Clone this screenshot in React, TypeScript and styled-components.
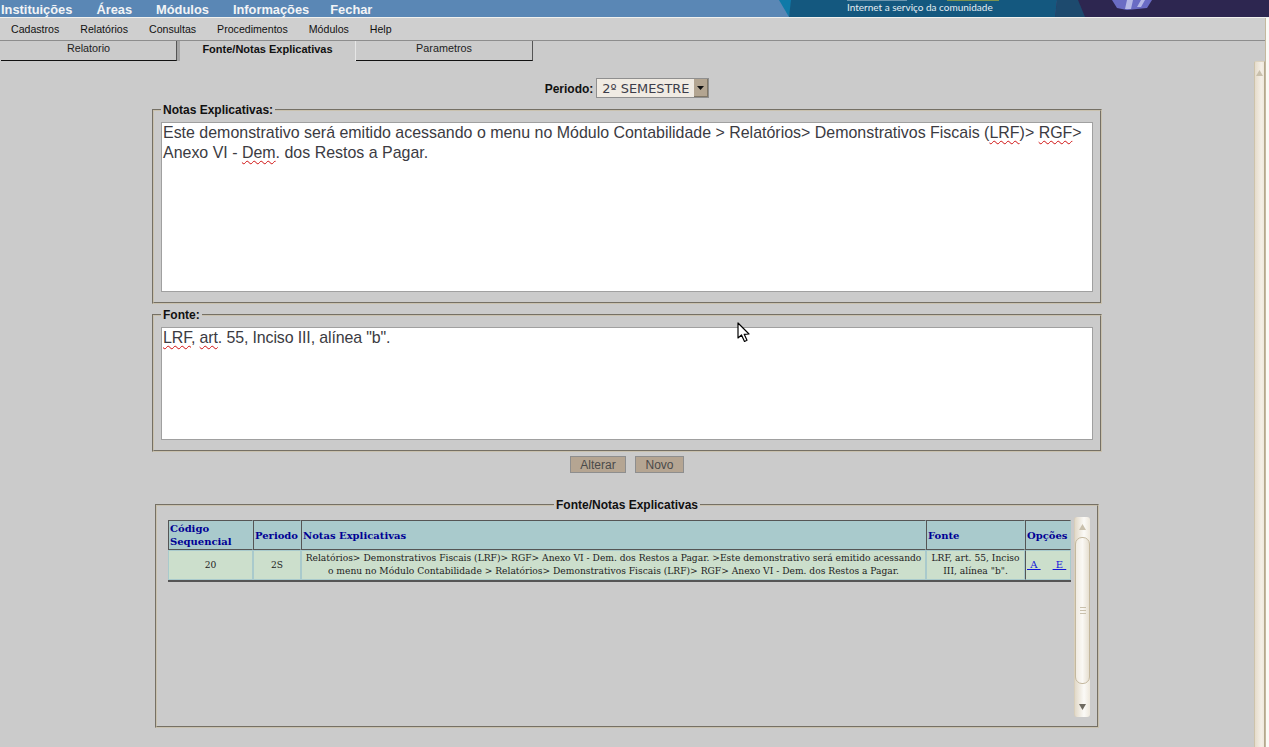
import styled, { createGlobalStyle } from "styled-components"

const GlobalStyle = createGlobalStyle`
  html, body {
    margin: 0;
    padding: 0;
    height: 747px;
    overflow: hidden;
    background: #cbcbcb;
    font-family: "Liberation Sans", Arial, sans-serif;
  }
`

const topMenu = ["Instituições", "Áreas", "Módulos", "Informações", "Fechar"]
const subMenu = ["Cadastros", "Relatórios", "Consultas", "Procedimentos", "Módulos", "Help"]

export default function App() {
  return (
    <Page>
      <GlobalStyle />
      <Banner>
        <TopMenu>
          {topMenu.map(item => (
            <TopItem key={item}>{item}</TopItem>
          ))}
        </TopMenu>
        <BannerArt>
          <svg width="494" height="17" viewBox="0 0 494 17">
            <rect width="494" height="17" fill="#5a87b5" />
            <polygon points="4,0 18,0 14,17" fill="#0f7aa8" />
            <polygon points="16,0 282,0 280,17 14,17" fill="#14587f" />
            <polygon points="282,0 494,0 494,17 280,17" fill="#2d2650" />
            <polygon points="280,17 282,0 303,0 310,17" fill="#1d4a6e" />
            <path d="M337 0 L377 0 L372 8 L352 10 L342 8 Z" fill="#6a6cc4" />
            <path d="M352 0 L358 0 L356 9 L350 9 Z M366 0 L370 0 L366 7 L362 7 Z" fill="#b6b9e6" />
            <rect x="72" y="0" width="60" height="1" fill="#a9c0cf" opacity="0.6" />
            <rect x="172" y="0" width="52" height="1" fill="#a8ad3c" opacity="0.7" />
          </svg>
          <BannerCaption>Internet a serviço da comunidade</BannerCaption>
        </BannerArt>
      </Banner>
      <Workspace>
        <Main>
          <SubMenu>
            {subMenu.map(item => (
              <SubItem key={item}>{item}</SubItem>
            ))}
          </SubMenu>
          <Tabs>
            <Tab $width={176}>Relatorio</Tab>
            <Tab $width={179} $active>
              Fonte/Notas Explicativas
            </Tab>
            <Tab $width={177}>Parametros</Tab>
          </Tabs>
          <Content>
            <Column>
              <Form>
                <PeriodRow>
                  <PeriodLabel>Periodo:</PeriodLabel>
                  <FakeSelect>
                    <span>2º SEMESTRE</span>
                    <SelectArrow>
                      <svg width="7" height="4" viewBox="0 0 7 4">
                        <polygon points="0,0 7,0 3.5,4" fill="#111" />
                      </svg>
                    </SelectArrow>
                  </FakeSelect>
                </PeriodRow>
                <FormGroup>
                  <GroupLegend>Notas Explicativas:</GroupLegend>
                  <TextBox $height={170}>
                    Este demonstrativo será emitido acessando o menu no Módulo Contabilidade &gt; Relatórios&gt;
                    Demonstrativos Fiscais (<Spell>LRF</Spell>)&gt; <Spell>RGF</Spell>&gt; Anexo VI - <Spell>Dem</Spell>. dos
                    Restos a Pagar.
                  </TextBox>
                </FormGroup>
                <FormGroup>
                  <GroupLegend>Fonte:</GroupLegend>
                  <TextBox $height={113} $tracking={-0.13}>
                    <Spell>LRF</Spell>, <Spell>art</Spell>. 55, Inciso III, alínea "b".
                  </TextBox>
                </FormGroup>
                <Buttons>
                  <ActionButton $width={56}>Alterar</ActionButton>
                  <ActionButton $width={49}>Novo</ActionButton>
                </Buttons>
                <ListGroup>
                  <ListLegend>Fonte/Notas Explicativas</ListLegend>
                  <ListBody>
                    <Table>
                      <colgroup>
                        <col style={{ width: 85 }} />
                        <col style={{ width: 48 }} />
                        <col style={{ width: 625 }} />
                        <col style={{ width: 99 }} />
                        <col style={{ width: 46 }} />
                      </colgroup>
                      <thead>
                        <tr>
                          <HeadCell>
                            Código
                            <br />
                            Sequencial
                          </HeadCell>
                          <HeadCell>Periodo</HeadCell>
                          <HeadCell>Notas Explicativas</HeadCell>
                          <HeadCell>Fonte</HeadCell>
                          <HeadCell>Opções</HeadCell>
                        </tr>
                      </thead>
                      <tbody>
                        <tr>
                          <BodyCell>20</BodyCell>
                          <BodyCell>2S</BodyCell>
                          <BodyCell>
                            Relatórios&gt; Demonstrativos Fiscais (LRF)&gt; RGF&gt; Anexo VI - Dem. dos Restos a Pagar.
                            &gt;Este demonstrativo será emitido acessando o menu no Módulo Contabilidade &gt; Relatórios&gt;
                            Demonstrativos Fiscais (LRF)&gt; RGF&gt; Anexo VI - Dem. dos Restos a Pagar.
                          </BodyCell>
                          <BodyCell>LRF, art. 55, Inciso III, alínea "b".</BodyCell>
                          <OptionsCell>
                            <OptionLink>{"\u00a0A\u00a0"}</OptionLink>
                            <OptionLink>{"\u00a0E\u00a0"}</OptionLink>
                          </OptionsCell>
                        </tr>
                      </tbody>
                    </Table>
                    <ListScrollbar>
                      <ScrollArrow>
                        <svg width="7" height="6" viewBox="0 0 7 6">
                          <polygon points="0,6 7,6 3.5,0" fill="#c9c0ac" />
                        </svg>
                      </ScrollArrow>
                      <ScrollThumb>
                        <Grip />
                        <Grip />
                        <Grip />
                      </ScrollThumb>
                      <ScrollArrow>
                        <svg width="7" height="6" viewBox="0 0 7 6">
                          <polygon points="0,0 7,0 3.5,6" fill="#6e6a60" />
                        </svg>
                      </ScrollArrow>
                    </ListScrollbar>
                  </ListBody>
                </ListGroup>
              </Form>
            </Column>
            <InnerScrollbar>
              <svg width="7" height="6" viewBox="0 0 7 6">
                <polygon points="0,6 7,6 3.5,0" fill="#c9c0ac" />
              </svg>
            </InnerScrollbar>
          </Content>
        </Main>
        <OuterScrollbar />
      </Workspace>
      <Pointer width="14" height="21" viewBox="0 0 14 21">
        <path
          d="M1 1 L1 16 L4.5 13 L7.5 19.5 L10 18.3 L7.2 12.3 L12 12 Z"
          fill="#fff"
          stroke="#000"
          strokeWidth="1.2"
          strokeLinejoin="round"
        />
      </Pointer>
    </Page>
  )
}

const Page = styled.div`
  position: relative;
  width: 1269px;
  height: 747px;
  overflow: hidden;
  display: flex;
  flex-direction: column;
  background: #cbcbcb;
`

const Banner = styled.div`
  height: 17px;
  flex: none;
  display: flex;
  justify-content: space-between;
  background: #5a87b5;
  border-bottom: 1px solid #f1f1ee;
  overflow: hidden;
`

const TopMenu = styled.div`
  display: flex;
  gap: 24px;
  padding-left: 1px;
`

const TopItem = styled.span`
  font-size: 12.85px;
  font-weight: bold;
  line-height: 19px;
  color: #f2f4f6;
  white-space: nowrap;

  &:last-child {
    margin-left: -3px;
  }
`

const BannerArt = styled.div`
  position: relative;
  width: 494px;
  height: 17px;
  svg {
    display: block;
  }
`

const BannerCaption = styled.span`
  position: absolute;
  left: 72px;
  top: 1px;
  font-family: "Lato", "Open Sans", sans-serif;
  font-size: 10px;
  line-height: 13px;
  color: #e4edf2;
  white-space: nowrap;
`

const Workspace = styled.div`
  flex: 1;
  min-height: 0;
  display: flex;
`

const Main = styled.div`
  flex: 1;
  min-width: 0;
  display: flex;
  flex-direction: column;
`

const OuterScrollbar = styled.div`
  width: 4px;
  flex: none;
  background: linear-gradient(to right, #c4b89e 0 1px, #fbfaf6 1px);
`

const SubMenu = styled.div`
  height: 22px;
  flex: none;
  display: flex;
  gap: 21px;
  padding-left: 11px;
  background: #cfcfcf;
  border-bottom: 1px solid #8d8d8d;
`

const SubItem = styled.span`
  font-size: 10.6px;
  line-height: 23px;
  color: #111;
  white-space: nowrap;
`

const Tabs = styled.div`
  height: 20px;
  flex: none;
  display: flex;
  padding-left: 1px;
`

const Tab = styled.div<{ $width: number; $active?: boolean }>`
  box-sizing: border-box;
  width: ${p => p.$width}px;
  font-size: ${p => (p.$active ? "11px" : "10.8px")};
  font-weight: ${p => (p.$active ? "bold" : "normal")};
  line-height: ${p => (p.$active ? "17px" : "15px")};
  text-align: center;
  color: ${p => (p.$active ? "#111" : "#222")};
  ${p =>
    p.$active
      ? "border-left: 3px solid #a5a5a5; border-right: 1px solid #e6e6e6;"
      : "border-bottom: 1px solid #111; border-right: 1px solid #555;"}
`

const Content = styled.div`
  flex: 1;
  min-height: 0;
  display: flex;
`

const Column = styled.div`
  flex: 1;
  min-width: 0;
`

const Form = styled.div`
  display: flex;
  flex-direction: column;
  align-items: center;
  padding-top: 17px;
`

const InnerScrollbar = styled.div`
  width: 11px;
  flex: none;
  display: flex;
  justify-content: center;
  padding-top: 8px;
  box-sizing: border-box;
  border-left: 1px solid #cdc3ab;
  border-top: 1px solid #dcd3bf;
  border-right: 1px solid #b3a88f;
  border-radius: 2px 0 0 0;
  background: linear-gradient(to right, #e6dccb, #f4efe7 70%, #efe8dc);

  svg {
    display: block;
  }
`

const PeriodRow = styled.div`
  display: flex;
  align-items: center;
  gap: 3px;
  height: 20px;
  margin: 0 0 1px -1px;
`

const PeriodLabel = styled.label`
  padding: 1px 0 0 1px;
  font-size: 12px;
  font-weight: bold;
  color: #111;
`

const FakeSelect = styled.div`
  box-sizing: border-box;
  width: 113px;
  height: 20px;
  display: flex;
  align-items: center;
  justify-content: space-between;
  padding-left: 5px;
  background: #f0ebe3;
  border: 1px solid #8f8f8f;
  font-family: "DejaVu Sans", sans-serif;
  font-size: 12.9px;
  color: #3d3d4a;
  white-space: nowrap;
`

const SelectArrow = styled.span`
  width: 14px;
  height: 18px;
  display: flex;
  align-items: center;
  justify-content: center;
  background: #b3a591;
  border-right: 1px solid #807766;
  border-bottom: 1px solid #807766;
  box-sizing: border-box;
`

const FormGroup = styled.fieldset`
  box-sizing: border-box;
  width: 950px;
  margin: 4px 0 0;
  padding: 5px 7px 10px;
  border: 2px groove #c9c1ae;
  min-inline-size: 0;
`

const GroupLegend = styled.legend`
  margin-left: 0;
  padding: 0 2px;
  font-size: 12px;
  font-weight: bold;
  line-height: 14px;
  color: #111;
`

const TextBox = styled.div<{ $height: number; $tracking?: number }>`
  box-sizing: border-box;
  height: ${p => p.$height}px;
  padding: 0 1px;
  background: #fff;
  border: 1px solid #a0a0a0;
  font-size: 15.96px;
  line-height: 20px;
  letter-spacing: ${p => p.$tracking ?? 0}px;
  color: #3b3b42;
`

const Spell = styled.span`
  text-decoration: underline wavy #d01010 1px;
  text-underline-offset: 2px;
`

const Buttons = styled.div`
  display: flex;
  gap: 9px;
  margin-top: 4px;
`

const ActionButton = styled.button<{ $width: number }>`
  box-sizing: border-box;
  width: ${p => p.$width}px;
  height: 17px;
  padding: 0;
  background: #b5a592;
  border: 1px solid #8e8e8e;
  font-family: "Liberation Sans", Arial, sans-serif;
  font-size: 12px;
  color: #4a4a4a;
`

const ListGroup = styled.fieldset`
  box-sizing: border-box;
  width: 944px;
  height: 230px;
  margin: 25px 0 0;
  padding: 0 8px 0 11px;
  border: 2px groove #c9c1ae;
  min-inline-size: 0;
`

const ListLegend = styled.legend`
  margin-left: 386px;
  padding: 0 2px;
  font-size: 12px;
  font-weight: bold;
  line-height: 14px;
  color: #111;
`

const ListBody = styled.div`
  display: flex;
  align-items: flex-start;
  gap: 3px;
`

const Table = styled.table`
  width: 903px;
  flex: none;
  margin-top: 8px;
  table-layout: fixed;
  border-collapse: separate;
  border-spacing: 0;
  border-bottom: 2px solid #555;
  font-family: "DejaVu Serif", serif;
`

const HeadCell = styled.th`
  box-sizing: content-box;
  height: 28px;
  padding: 0 1px;
  background: #a9cacc;
  border-top: 1px solid #555;
  border-left: 1px solid #555;
  border-right: 1px solid #a9cacc;
  border-bottom: 1px solid #555;
  font-size: 10px;
  line-height: 13px;
  font-weight: bold;
  text-align: left;
  color: #000094;
  white-space: nowrap;
`

const BodyCell = styled.td`
  height: 28px;
  padding: 0 2px;
  background: #ccdfcc;
  border: 1px solid #a9cacc;
  font-size: 9.14px;
  line-height: 13px;
  text-align: center;
  color: #1c1c1c;
`

const OptionsCell = styled(BodyCell)`
  padding: 0 0 0 1px;
  border-left: 1px solid #555;
  text-align: left;
  white-space: nowrap;
`

const OptionLink = styled.a`
  margin-right: 12px;
  color: #1414d8;
  text-decoration: underline;
  font-size: 10px;

  &:last-child {
    margin-right: 0;
  }
`

const ListScrollbar = styled.div`
  box-sizing: border-box;
  width: 16px;
  height: 200px;
  flex: none;
  margin-top: 5px;
  display: flex;
  flex-direction: column;
  background: linear-gradient(to right, #e2d9c8, #fbfaf7 60%, #eee8dc);
  border-radius: 3px;
  border-left: 1px solid #d8cfbb;
`

const ScrollArrow = styled.div`
  height: 20px;
  flex: none;
  display: flex;
  align-items: center;
  justify-content: center;
`

const ScrollThumb = styled.div`
  box-sizing: border-box;
  height: 147px;
  flex: none;
  margin-bottom: 13px;
  display: flex;
  flex-direction: column;
  align-items: center;
  justify-content: center;
  gap: 2px;
  background: linear-gradient(to right, #f0ebe2, #faf8f4 50%, #e6dfd1);
  border: 1px solid #c4b89e;
  border-radius: 7px;
`

const Grip = styled.span`
  width: 6px;
  height: 1px;
  background: #c9c0ac;
`

const Pointer = styled.svg`
  position: absolute;
  left: 737px;
  top: 322px;
`
